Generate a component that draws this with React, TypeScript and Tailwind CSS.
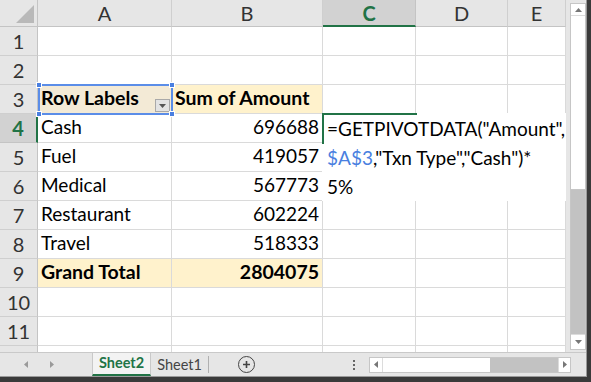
import React from "react";

const font = { fontFamily: "Lato, 'Open Sans', sans-serif" };

type Cell = { text?: string; bold?: boolean; right?: boolean; bg?: string };

const rows: Cell[][] = [
  [{}, {}],
  [{}, {}],
  [{ text: "Row Labels", bold: true, bg: "bg-[#f3ead6]" }, { text: "Sum of Amount", bold: true, bg: "bg-[#fff2cc]" }],
  [{ text: "Cash" }, { text: "696688", right: true }],
  [{ text: "Fuel" }, { text: "419057", right: true }],
  [{ text: "Medical" }, { text: "567773", right: true }],
  [{ text: "Restaurant" }, { text: "602224", right: true }],
  [{ text: "Travel" }, { text: "518333", right: true }],
  [{ text: "Grand Total", bold: true, bg: "bg-[#fff2cc]" }, { text: "2804075", bold: true, right: true, bg: "bg-[#fff2cc]" }],
  [{}, {}],
  [{}, {}],
];

function Handle({ cls }: { cls: string }) {
  return <div className={`absolute w-[6px] h-[6px] bg-[#4a7fe0] border border-white ${cls}`} />;
}

export default function App() {
  return (
    <div className="w-[591px] h-[382px] bg-[#3a3a3a] overflow-hidden" style={font}>
      <div className="flex flex-col w-[587px] h-[377px] bg-[#e6e6e6] border-r border-b border-[#9a9a9a]">
        <div className="flex h-[352px]">
          {/* sheet grid */}
          <div className="relative grid grid-cols-[38px_134px_151px_93px_92px_58px] grid-rows-[27px_repeat(11,29px)_6px] w-[566px] h-[352px] bg-white text-[19px] text-black">
            {/* header row */}
            <div className="relative bg-[#e6e6e6] border-r border-b border-[#c4c4c4]">
              <svg className="absolute right-[3px] bottom-[3px]" width="18" height="18" viewBox="0 0 18 18">
                <polygon points="18,0 18,18 0,18" fill="#b9b9b9" />
              </svg>
            </div>
            {["A", "B", "C", "D", "E"].map((l) => (
              <div
                key={l}
                className={
                  l === "C"
                    ? "flex items-center justify-center bg-[#d2d2d2] border-r border-[#c4c4c4] border-b-2 border-b-[#217346] text-[#217346] text-[20px] font-bold"
                    : "flex items-center justify-center bg-[#e6e6e6] border-r border-b border-[#cfcfcf] border-b-[#c4c4c4] text-[#333] text-[20px]"
                }
              >
                {l}
              </div>
            ))}
            {rows.map((r, i) => {
              const n = i + 1;
              return (
                <React.Fragment key={n}>
                  <div
                    className={
                      n === 4
                        ? "flex items-center justify-center bg-[#d2d2d2] border-b border-[#c4c4c4] border-r-2 border-r-[#217346] text-[#217346] font-bold text-[20px]"
                        : "flex items-center justify-center bg-[#e6e6e6] border-b border-r border-[#cfcfcf] border-r-[#c4c4c4] text-[#333] text-[20px]"
                    }
                  >
                    {n}
                  </div>
                  {r.map((c, j) => (
                    <div
                      key={j}
                      className={`flex items-end pb-[1px] px-[3px] whitespace-nowrap border-r border-b border-[#dadada] ${c.bg ?? ""} ${c.right ? "justify-end" : ""} ${c.bold ? "font-bold text-[19.5px]" : ""}`}
                    >
                      {c.text}
                    </div>
                  ))}
                  <div className="border-r border-b border-[#dadada]" />
                  <div className="border-r border-b border-[#dadada]" />
                  <div className="border-r border-b border-[#dadada]" />
                </React.Fragment>
              );
            })}
            {/* partial row 12 */}
            <div className="bg-[#e6e6e6] border-r border-[#c4c4c4]" />
            <div className="border-r border-[#dadada]" />
            <div className="border-r border-[#dadada]" />
            <div className="border-r border-[#dadada]" />
            <div className="border-r border-[#dadada]" />
            <div className="border-r border-[#dadada]" />

            {/* A3 dropdown button */}
            <div className="absolute left-[155px] top-[99px] w-[15px] h-[13px] bg-[#e3e3e3] border border-[#a9a9a9] flex items-center justify-center">
              <svg width="7" height="4" viewBox="0 0 7 4">
                <polygon points="0,0 7,0 3.5,4" fill="#555" />
              </svg>
            </div>
            {/* A3 formula-reference border */}
            <div className="absolute left-[38px] top-[84px] w-[135px] h-[31px] border-2 border-[#5b8de8] pointer-events-none">
              <Handle cls="-left-[4px] -top-[4px]" />
              <Handle cls="-right-[4px] -top-[4px]" />
              <Handle cls="-left-[4px] -bottom-[4px]" />
              <Handle cls="-right-[4px] -bottom-[4px]" />
            </div>
            {/* C4 edit box */}
            <div className="absolute left-[322px] top-[113px] w-[244px] h-[88px] bg-white pl-[5px] pt-[1px] leading-[29px] text-[19px] whitespace-nowrap">
              <div>=GETPIVOTDATA("Amount",</div>
              <div>
                <span className="text-[#4a7fe0]">$A$3</span>,"Txn Type","Cash")*
              </div>
              <div>5%</div>
            </div>
            {/* C4 active cell border (top + left) */}
            <div className="absolute left-[322px] top-[113px] w-[95px] h-[2px] bg-[#217346]" />
            <div className="absolute left-[322px] top-[113px] w-[2px] h-[31px] bg-[#217346]" />
          </div>
          {/* vertical scrollbar */}
          <div className="w-[20px] h-[352px] pl-[4px] pt-[3px] pb-[2px]">
            <div className="flex flex-col w-[16px] h-full border border-[#c6c6c6] bg-[#c2c2c2]">
              <div className="h-[12px] bg-white border-b border-[#dcdcdc] flex items-center justify-center">
                <svg width="7" height="4" viewBox="0 0 7 4">
                  <polygon points="0,4 7,4 3.5,0" fill="#777" />
                </svg>
              </div>
              <div className="h-[174px] bg-white border-b border-[#c6c6c6]" />
              <div className="flex-1" />
              <div className="h-[15px] bg-white border-t border-[#dcdcdc] flex items-center justify-center">
                <svg width="7" height="4" viewBox="0 0 7 4">
                  <polygon points="0,0 7,0 3.5,4" fill="#777" />
                </svg>
              </div>
            </div>
          </div>
        </div>
        {/* tab bar */}
        <div className="relative flex items-center h-[24px] border-t border-[#c9c9c9] text-[14.5px]">
          <div className="w-[92px] flex items-center pl-[24px] gap-[22px]">
            <svg width="4" height="7" viewBox="0 0 4 7">
              <polygon points="4,0 4,7 0,3.5" fill="#9a9a9a" />
            </svg>
            <svg width="4" height="7" viewBox="0 0 4 7">
              <polygon points="0,0 0,7 4,3.5" fill="#9a9a9a" />
            </svg>
          </div>
          <div className="w-[59px] h-full -mt-[1px] bg-[#f3f3f3] border-x border-[#c9c9c9] border-b-2 border-b-[#217346] flex items-center justify-center font-bold text-[#217346]">
            Sheet2
          </div>
          <div className="w-[58px] h-[17px] flex items-center justify-center text-[#444] border-r border-[#b0b0b0]">
            Sheet1
          </div>
          <div className="ml-[29px] w-[17px] h-[17px] rounded-full border-[1.5px] border-[#444] flex items-center justify-center">
            <svg width="9" height="9" viewBox="0 0 9 9">
              <path d="M4.5 1 V8 M1 4.5 H8" stroke="#444" strokeWidth="1.6" />
            </svg>
          </div>
          <div className="ml-[98px] flex flex-col gap-[2px]">
            <div className="w-[2px] h-[2px] bg-[#666]" />
            <div className="w-[2px] h-[2px] bg-[#666]" />
            <div className="w-[2px] h-[2px] bg-[#666]" />
          </div>
          <div className="ml-[14px] flex w-[202px] h-[16px] border border-[#c6c6c6] bg-[#c2c2c2]">
            <div className="w-[13px] bg-white border-r border-[#dcdcdc] flex items-center justify-center">
              <svg width="4" height="7" viewBox="0 0 4 7">
                <polygon points="4,0 4,7 0,3.5" fill="#777" />
              </svg>
            </div>
            <div className="w-[107px] bg-white" />
            <div className="flex-1" />
            <div className="w-[12px] bg-white border-l border-[#dcdcdc] flex items-center justify-center">
              <svg width="4" height="7" viewBox="0 0 4 7">
                <polygon points="0,0 0,7 4,3.5" fill="#777" />
              </svg>
            </div>
          </div>
        </div>
      </div>
    </div>
  );
}
